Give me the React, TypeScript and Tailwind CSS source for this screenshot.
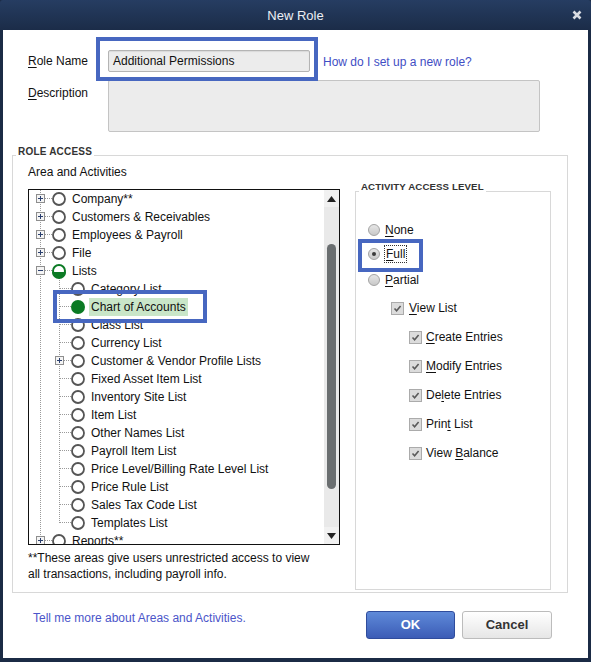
import React from "react";

type Row = {
  level: 0 | 1;
  text: string;
  expander?: "+" | "-";
  state?: "none" | "partial" | "full";
  selected?: boolean;
  last?: boolean;
};

const ROWS: Row[] = [
  { level: 0, text: "Company**", expander: "+" },
  { level: 0, text: "Customers & Receivables", expander: "+" },
  { level: 0, text: "Employees & Payroll", expander: "+" },
  { level: 0, text: "File", expander: "+" },
  { level: 0, text: "Lists", expander: "-", state: "partial" },
  { level: 1, text: "Category List" },
  { level: 1, text: "Chart of Accounts", state: "full", selected: true },
  { level: 1, text: "Class List" },
  { level: 1, text: "Currency List" },
  { level: 1, text: "Customer & Vendor Profile Lists", expander: "+" },
  { level: 1, text: "Fixed Asset Item List" },
  { level: 1, text: "Inventory Site List" },
  { level: 1, text: "Item List" },
  { level: 1, text: "Other Names List" },
  { level: 1, text: "Payroll Item List" },
  { level: 1, text: "Price Level/Billing Rate Level List" },
  { level: 1, text: "Price Rule List" },
  { level: 1, text: "Sales Tax Code List" },
  { level: 1, text: "Templates List", last: true },
  { level: 0, text: "Reports**", expander: "+" },
];

const DOT = "#9a9a9a";

const Expander = ({ x, kind }: { x: number; kind: "+" | "-" }) => (
  <g>
    <rect x={x + 0.5} y={4.5} width={8} height={8} fill="#f4f4f4" stroke="#8e8e8e" />
    <line x1={x + 2} y1={8.5} x2={x + 7} y2={8.5} stroke="#2a3f6e" />
    {kind === "+" && <line x1={x + 4.5} y1={6} x2={x + 4.5} y2={11} stroke="#2a3f6e" />}
  </g>
);

const StateCircle = ({ cx, state }: { cx: number; state?: Row["state"] }) => {
  if (state === "full") return <circle cx={cx} cy={9} r={7} fill="#0b7a24" />;
  if (state === "partial")
    return (
      <g>
        <circle cx={cx} cy={9} r={6} fill="#fff" stroke="#0b7a24" strokeWidth={2} />
        <path d={`M ${cx - 7} 10 A 7 7 0 0 0 ${cx + 7} 10 Z`} fill="#0b7a24" />
      </g>
    );
  return <circle cx={cx} cy={9} r={6} fill="#fff" stroke="#555" strokeWidth={1.8} />;
};

const TreeRow = ({ row }: { row: Row }) => {
  const lvl = row.level;
  const width = lvl === 0 ? 40 : 59;
  return (
    <div className="flex items-center h-[18px] whitespace-nowrap">
      <svg width={width} height={18} className="shrink-0">
        <line x1={11.5} y1={0} x2={11.5} y2={18} stroke={DOT} strokeDasharray="1 1" />
        {lvl === 0 && (
          <>
            <line x1={16} y1={8.5} x2={23} y2={8.5} stroke={DOT} strokeDasharray="1 1" />
            {row.expander && <Expander x={7} kind={row.expander} />}
            {row.text === "Lists" && (
              <line x1={30.5} y1={16} x2={30.5} y2={18} stroke={DOT} strokeDasharray="1 1" />
            )}
            <StateCircle cx={30} state={row.state} />
          </>
        )}
        {lvl === 1 && (
          <>
            <line x1={30.5} y1={0} x2={30.5} y2={row.last ? 9 : 18} stroke={DOT} strokeDasharray="1 1" />
            <line x1={31} y1={8.5} x2={42} y2={8.5} stroke={DOT} strokeDasharray="1 1" />
            {row.expander && <Expander x={26} kind={row.expander} />}
            <StateCircle cx={49} state={row.state} />
          </>
        )}
      </svg>
      <span className={`ml-[1px] px-[2px] leading-[18px] ${row.selected ? "bg-[#c9e6c8]" : ""}`}>
        {row.text}
      </span>
    </div>
  );
};

const Radio = ({ checked }: { checked?: boolean }) => (
  <span className="w-[12px] h-[12px] rounded-full border border-[#a3a3a3] bg-gradient-to-b from-[#e6e6e6] to-[#c9c9c9] flex items-center justify-center shrink-0">
    {checked && <span className="w-[4px] h-[4px] rounded-full bg-[#3a3a3a]" />}
  </span>
);

const Check = () => (
  <span className="w-[13px] h-[13px] border border-[#ababab] bg-[#dcdcdc] flex items-center justify-center shrink-0">
    <svg width="9" height="9" viewBox="0 0 9 9">
      <path d="M1.5 4.5 L3.6 6.7 L7.6 2" fill="none" stroke="#5a5a5a" strokeWidth="1.6" />
    </svg>
  </span>
);

const Key = ({ children }: { children: React.ReactNode }) => <u className="underline-offset-2">{children}</u>;

export default function App() {
  return (
    <div
      className="w-[591px] h-[662px] bg-[#1b2b45] flex flex-col relative text-[12px] text-[#111]"
      style={{ fontFamily: '"Liberation Sans", Arial, sans-serif' }}
    >
      {/* title bar */}
      <div className="h-[30px] shrink-0 grid grid-cols-[1fr_auto_1fr] items-center bg-gradient-to-b from-[#263d62] to-[#1b2c48] rounded-t-[3px]">
        <div />
        <div className="text-[13px] text-[#eceff4] pt-[1px]">New Role</div>
        <div className="flex justify-end pr-[9px]">
          <svg width="10" height="10" viewBox="0 0 10 10">
            <path d="M1.5 1.5 L8.5 8.5 M8.5 1.5 L1.5 8.5" stroke="#d9dce2" strokeWidth="2.6" />
          </svg>
        </div>
      </div>

      {/* body */}
      <div className="flex-1 mx-[3px] mb-[4px] bg-white flex flex-col">
        <div className="pl-[25px] pt-[20px] grid grid-cols-[80px_auto] gap-y-[8px]">
          <div className="h-[22px] flex items-center">
            <Key>R</Key>ole Name
          </div>
          <div className="flex items-center">
            <div className="w-[202px] h-[22px] rounded-[2px] border border-[#b4b4b4] bg-[#ececec] shadow-[inset_0_1px_1px_rgba(0,0,0,0.08)] flex items-center px-[4px] text-[12px]">
              Additional Permissions
            </div>
            <span className="ml-[13px] text-[#3f4ec4] mt-[2px]">How do I set up a new role?</span>
          </div>
          <div className="pt-[4px]">
            <Key>D</Key>escription
          </div>
          <div className="w-[432px] h-[52px] rounded-[2px] border border-[#c4c4c4] bg-[#ececec]" />
        </div>

        <fieldset className="mt-[14px] ml-[9px] mr-[20px] border border-[#d8d8d8] p-0 m-0">
          <legend className="ml-[3px] px-[2px] leading-[12px] pb-[6px] text-[10px] font-bold text-[#333] tracking-[0.2px]">
            ROLE ACCESS
          </legend>
          <div className="flex pl-[15px] pr-[16px] pb-[2px]">
            <div className="w-[312px]">
              <div className="leading-[16px]">Area and Activities</div>
              <div className="mt-[9px] h-[356px] border border-[#111] flex">
                <div className="flex-1 overflow-hidden">
                  {ROWS.map((r, i) => (
                    <TreeRow key={i} row={r} />
                  ))}
                </div>
                <div className="w-[15px] bg-[#e9e9e9] flex flex-col items-center">
                  <div className="h-[17px] w-full bg-[#f1f1f1] flex items-center justify-center">
                    <svg width="9" height="6" viewBox="0 0 9 6">
                      <path d="M0 6 L4.5 0 L9 6 Z" fill="#222" />
                    </svg>
                  </div>
                  <div className="mt-[37px] w-[9px] h-[245px] rounded-full bg-[#6a6e70]" />
                  <div className="flex-1" />
                  <div className="h-[17px] w-full bg-[#f1f1f1] flex items-center justify-center">
                    <svg width="9" height="6" viewBox="0 0 9 6">
                      <path d="M0 0 L9 0 L4.5 6 Z" fill="#222" />
                    </svg>
                  </div>
                </div>
              </div>
              <div className="mt-[5px] leading-[16px]">
                **These areas give users unrestricted access to view
                <br />
                all transactions, including payroll info.
              </div>
            </div>

            <fieldset className="ml-[15px] mt-[17px] w-[196px] h-[409px] border border-[#d8d8d8] p-0 m-0 self-start">
              <legend className="ml-[3px] px-[2px] leading-[12px] pb-[8px] text-[9.7px] font-bold text-[#333] tracking-[0.1px]">
                ACTIVITY ACCESS LEVEL
              </legend>
              <div className="flex flex-col text-[12px]">
                <div className="mt-[19px] h-[20px] flex items-center pl-[12px] gap-[5px]">
                  <Radio />
                  <span>
                    <Key>N</Key>one
                  </span>
                </div>
                <div className="mt-[4px] h-[20px] flex items-center pl-[12px] gap-[4px]">
                  <Radio checked />
                  <span className="border border-dotted border-[#333] px-[1px] leading-[16px]">
                    <Key>F</Key>ull
                  </span>
                </div>
                <div className="mt-[6px] h-[20px] flex items-center pl-[12px] gap-[5px]">
                  <Radio />
                  <span>
                    <Key>P</Key>artial
                  </span>
                </div>
                <div className="mt-[8px] h-[20px] flex items-center pl-[35px] gap-[5px]">
                  <Check />
                  <span>
                    <Key>V</Key>iew List
                  </span>
                </div>
                {[
                  ["", "C", "reate Entries"],
                  ["", "M", "odify Entries"],
                  ["De", "l", "ete Entries"],
                  ["Prin", "t", " List"],
                  ["View ", "B", "alance"],
                ].map(([a, k, b], i) => (
                  <div key={i} className="mt-[9px] h-[20px] flex items-center pl-[53px] gap-[4px]">
                    <Check />
                    <span className="whitespace-pre">
                      {a}
                      <Key>{k}</Key>
                      {b}
                    </span>
                  </div>
                ))}
              </div>
            </fieldset>
          </div>
        </fieldset>

        <div className="mt-[17px] flex items-start pl-[30px] pr-[36px]">
          <span className="leading-[16px] text-[#4b55c9]">Tell me more about Areas and Activities.</span>
          <div className="flex-1" />
          <button className="mt-[1px] w-[89px] h-[28px] rounded-[3px] border border-[#2f4c9c] bg-gradient-to-b from-[#5f8ad9] to-[#3c5cb6] text-white font-bold text-[13px]">
            OK
          </button>
          <button className="mt-[1px] ml-[7px] w-[90px] h-[28px] rounded-[3px] border border-[#bcbcbc] bg-gradient-to-b from-[#ffffff] to-[#e6e6e6] text-[#333] font-bold text-[13px]">
            Cancel
          </button>
        </div>
      </div>

      {/* annotation highlights */}
      <div className="absolute left-[96px] top-[37px] w-[222px] h-[44px] border-[4px] border-[#4767c0] pointer-events-none" />
      <div className="absolute left-[53px] top-[290px] w-[154px] h-[33px] border-[4px] border-[#4767c0] pointer-events-none" />
      <div className="absolute left-[358px] top-[239px] w-[65px] h-[33px] border-[4px] border-[#4767c0] pointer-events-none" />
    </div>
  );
}
